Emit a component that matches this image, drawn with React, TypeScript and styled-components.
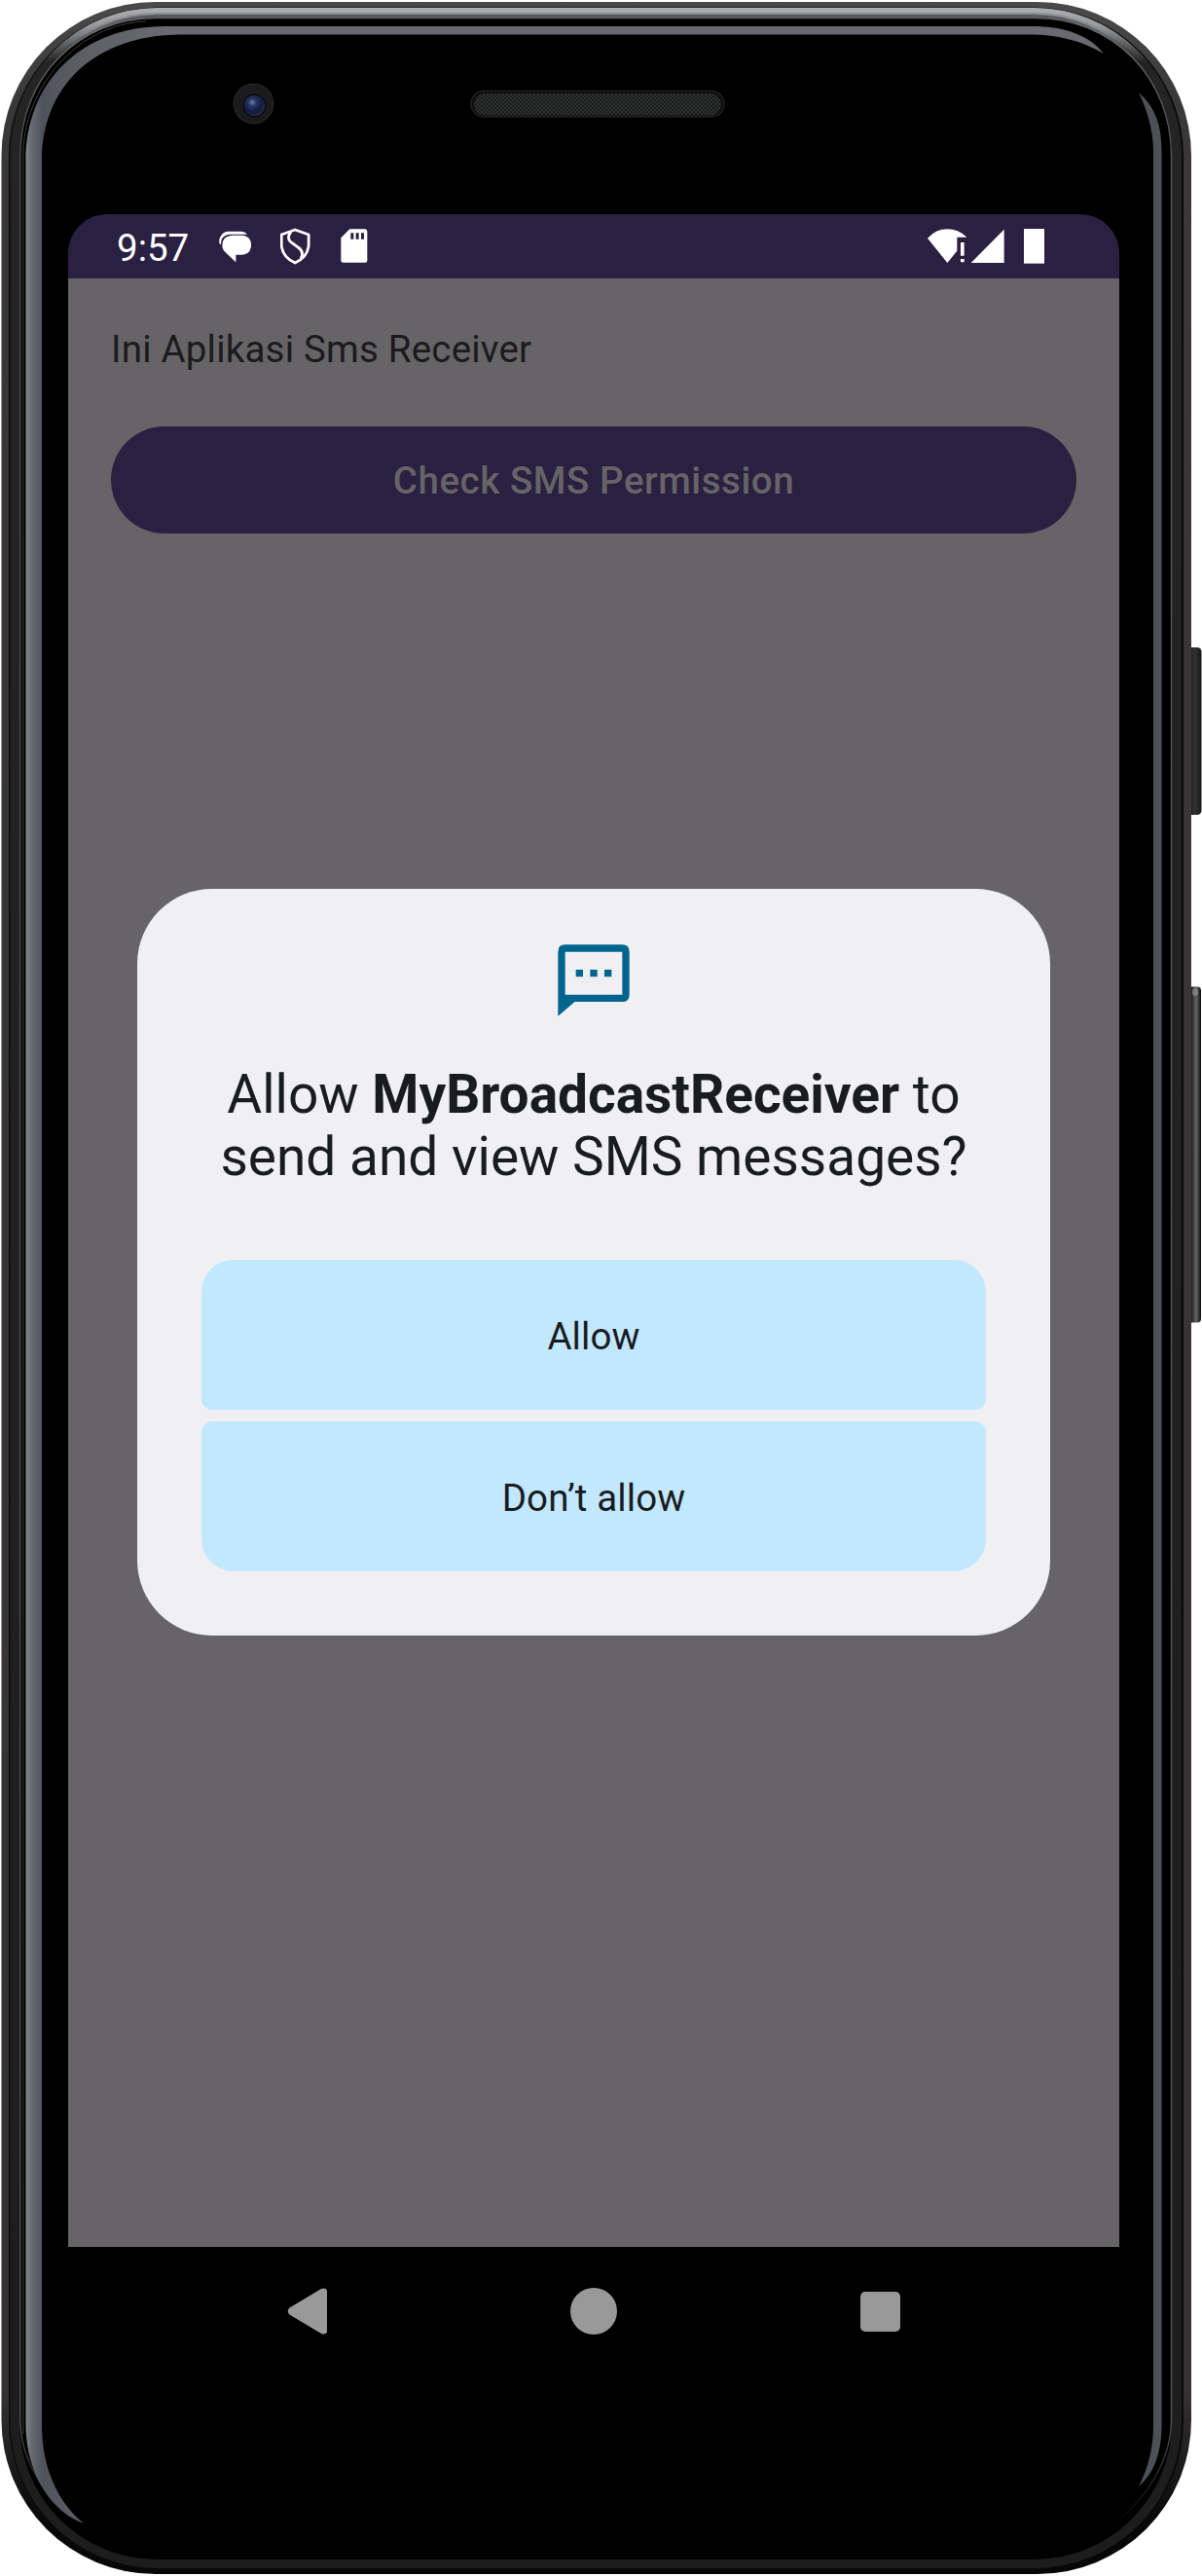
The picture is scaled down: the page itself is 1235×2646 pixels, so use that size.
import React from "react";
import styled, { createGlobalStyle } from "styled-components";

const GlobalStyle = createGlobalStyle`
  * { box-sizing: border-box; }
  body { margin: 0; background: #fff; font-family: Roboto, "Noto Sans", sans-serif; }
`;

const Stage = styled.main`
  position: relative;
  display: flex;
  width: 1235px;
  height: 2646px;
  padding: 220px 85px 0 70px;
  overflow: hidden;
`;

const DeviceArt = styled.svg`
  position: absolute;
  inset: 0;
  display: block;
`;

const Screen = styled.div`
  position: relative;
  display: flex;
  flex-direction: column;
  width: 1080px;
  height: 2220px;
  border-radius: 40px;
  overflow: hidden;
  background: #000;
`;

const StatusBar = styled.header`
  display: flex;
  align-items: center;
  flex: 0 0 66px;
  padding: 0 77px 0 50px;
  background: #2a2042;
  color: #fff;
`;

const Clock = styled.span`
  width: 105px;
  padding-top: 3px;
  font-size: 38.5px;
  line-height: 45px;
`;

const StatusGroup = styled.div<{ $gap: number; $end?: boolean }>`
  display: flex;
  align-items: center;
  gap: ${(p) => p.$gap}px;
  margin-left: ${(p) => (p.$end ? "auto" : "0")};
`;

const Glyph = styled.svg`
  display: block;
  flex: none;
`;

const Content = styled.section`
  position: relative;
  display: flex;
  flex-direction: column;
  flex: 1;
  padding: 44px;
  background: #666466;
`;

const Intro = styled.p`
  margin: 0 0 44px;
  padding: 1px 0 8px;
  font-size: 38.5px;
  line-height: 55px;
  letter-spacing: 0.2px;
  color: #1b1a1c;
`;

const PrimaryButton = styled.button`
  height: 110px;
  border: 0;
  border-radius: 55px;
  background: #2a2042;
  color: #666466;
  font: 500 38.5px/55px Roboto, sans-serif;
  letter-spacing: 0.55px;
  padding-top: 2px;
`;

const DialogLayer = styled.div`
  position: absolute;
  inset: 0;
  display: flex;
  align-items: center;
  justify-content: center;
  padding-bottom: 1px;
`;

const Dialog = styled.div`
  display: flex;
  flex-direction: column;
  align-items: center;
  width: 938px;
  height: 767px;
  padding: 50px 66px 66px;
  border-radius: 77px;
  background: #f0f0f3;
  color: #191c1e;
`;

const DialogTitle = styled.h1`
  margin: 41px 0 0;
  font-size: 55px;
  font-weight: 400;
  line-height: 64px;
  text-align: center;
`;

const Actions = styled.div`
  display: flex;
  flex-direction: column;
  gap: 12px;
  width: 100%;
  margin-top: auto;
`;

const ActionButton = styled.button<{ $last?: boolean }>`
  height: 154px;
  padding-top: 4px;
  border: 0;
  border-radius: ${(p) => (p.$last ? "11px 11px 33px 33px" : "33px 33px 11px 11px")};
  background: #c2e8ff;
  color: #191c1e;
  font: 400 38.5px/45px Roboto, sans-serif;
  letter-spacing: 0.1px;
`;

const NavBar = styled.nav`
  display: flex;
  align-items: center;
  justify-content: space-between;
  flex: 0 0 132px;
  padding: 0 225px;
  background: #000;
`;

function PhoneArt() {
  return (
    <DeviceArt width="1235" height="2646" viewBox="0 0 1235 2646" aria-hidden="true">
      <defs>
        <linearGradient id="rim" gradientUnits="userSpaceOnUse" x1="0" y1="2" x2="0" y2="2644">
          <stop offset="0" stopColor="#4b4949" />
          <stop offset="0.04" stopColor="#3a3738" />
          <stop offset="0.93" stopColor="#353233" />
          <stop offset="0.98" stopColor="#070707" />
        </linearGradient>
        <linearGradient id="metal" gradientUnits="userSpaceOnUse" x1="0" y1="0" x2="0" y2="2644">
          <stop offset="0" stopColor="#8e9094" />
          <stop offset="0.012" stopColor="#85878b" />
          <stop offset="0.024" stopColor="#242424" />
          <stop offset="1" stopColor="#1d1d1d" />
        </linearGradient>
        <linearGradient id="metalBright" gradientUnits="userSpaceOnUse" x1="0" y1="0" x2="0" y2="90">
          <stop offset="0" stopColor="#b4b6b9" />
          <stop offset="0.3" stopColor="#96989b" />
          <stop offset="0.75" stopColor="#262626" stopOpacity="0" />
        </linearGradient>
        <linearGradient id="metalDim" gradientUnits="userSpaceOnUse" x1="0" y1="0" x2="0" y2="90">
          <stop offset="0" stopColor="#505255" />
          <stop offset="0.75" stopColor="#262626" stopOpacity="0" />
        </linearGradient>
        <linearGradient id="leftGlare" gradientUnits="userSpaceOnUse" x1="26" y1="0" x2="200" y2="0">
          <stop offset="0" stopColor="#888a8d" />
          <stop offset="0.035" stopColor="#686b71" />
          <stop offset="0.1" stopColor="#4f535b" />
          <stop offset="0.35" stopColor="#5e5f66" />
          <stop offset="0.8" stopColor="#696a71" />
        </linearGradient>
        <linearGradient id="edgeLight" gradientUnits="userSpaceOnUse" x1="0" y1="0" x2="0" y2="2646">
          <stop offset="0" stopColor="#6c6d6f" />
          <stop offset="0.94" stopColor="#6c6d6f" />
          <stop offset="0.98" stopColor="#6c6d6f" stopOpacity="0" />
        </linearGradient>
        <linearGradient id="power" x1="0" x2="1" y1="0" y2="0">
          <stop offset="0" stopColor="#0c0c0c" />
          <stop offset="0.5" stopColor="#333" />
          <stop offset="1" stopColor="#171717" />
        </linearGradient>
        <linearGradient id="volume" x1="0" x2="1" y1="0" y2="0">
          <stop offset="0" stopColor="#101010" />
          <stop offset="0.35" stopColor="#2b2b2b" />
          <stop offset="0.65" stopColor="#666" />
          <stop offset="1" stopColor="#0b0b0b" />
        </linearGradient>
        <radialGradient id="lens" cx="0.4" cy="0.35" r="0.65">
          <stop offset="0" stopColor="#6f7cab" />
          <stop offset="0.3" stopColor="#26335f" />
          <stop offset="0.7" stopColor="#141d40" />
          <stop offset="1" stopColor="#232a45" />
        </radialGradient>
        <pattern id="mesh" width="4" height="4" patternUnits="userSpaceOnUse">
          <rect width="4" height="4" fill="#181a19" />
          <circle cx="1" cy="1" r="0.8" fill="#525553" />
          <circle cx="3" cy="3" r="0.8" fill="#525553" />
        </pattern>
      </defs>

      <rect x="1220" y="665" width="14.5" height="172" rx="4.5" fill="url(#power)" />
      <rect x="1220" y="1013.500" width="14" height="345" rx="4" fill="url(#volume)" />
      <rect x="1225" y="1015" width="6" height="8" rx="3" fill="#9a9a9a" opacity="0.6" />

      <rect x="1.500" y="2" width="1222.500" height="2642" rx="158" fill="url(#rim)" />
      <rect x="9" y="7.500" width="1207" height="2632" rx="153" fill="#090909" />
      <rect x="10.500" y="8.500" width="1203.500" height="2629.500" rx="151" fill="url(#metal)" />
      <rect x="12" y="10.500" width="1200" height="2625" rx="150" fill="none" stroke="url(#metalBright)" strokeWidth="5" />
      <rect x="18" y="16.500" width="1188" height="2610" rx="144" fill="none" stroke="url(#metalDim)" strokeWidth="3" />
      <rect x="20" y="18" width="1184" height="2611" rx="141" fill="#000" />
      <path
        d="M91 2600C50 2572 20.800 2530 20.800 2485V160C20.800 80 80 18.500 160 18.500H1064C1144 18.500 1203.500 80 1203.500 160V2485C1203.500 2530 1174 2574 1133 2600"
        fill="none" stroke="url(#edgeLight)" strokeWidth="1.300" opacity="0.8"
      />
      <path d="M23.800 2500V160C23.800 90 80 24 150 22" fill="none" stroke="#3c3c3d" strokeWidth="1" />

      <path
        d="M26.500 2490V165C26.500 84 84 27 170 27H1060C1095 27 1120 37 1134 55C1112 42 1086 35.500 1060 35.500H185C96 36 43 90 43 165V2490C43 2535 59 2570 86 2592C48 2578 26.500 2535 26.500 2490Z"
        fill="url(#leftGlare)"
      />
      <path
        d="M1170 95C1184 108 1193.500 123 1193.500 155V2490C1193.500 2520 1186 2540 1170 2554C1180 2534 1185 2515 1185 2490V155C1185 133 1178 112 1170 95Z"
        fill="#4e5057"
      />

      <circle cx="260.500" cy="106.500" r="21" fill="#1b1b1d" />
      <circle cx="260.500" cy="106.500" r="20" fill="none" stroke="#29292b" strokeWidth="1.500" strokeDasharray="1 1" />
      <circle cx="261.500" cy="108.500" r="12" fill="#07080e" />
      <circle cx="261.500" cy="108.500" r="10.800" fill="url(#lens)" />

      <rect x="484" y="93.500" width="260" height="26.500" rx="13.250" fill="#0c0c0d" stroke="#202024" strokeWidth="1.500" />
      <rect x="487" y="96" width="254" height="22.500" rx="11.200" fill="url(#mesh)" />
    </DeviceArt>
  );
}

function StatusIcons() {
  return (
    <StatusGroup $gap={29}>
      <Glyph width="33.7" height="32.7" viewBox="374 85 101 98" fill="#fff">
        <path d="M377 127C373 120 374 110 379 102Q388 87 402 87H440Q454 87 461 96H411Q390 96 383 110Q380 118 380 126Z" />
        <path d="M414 99H443Q473 101 473 129Q473 158 443 159H426V182L394 152Q384 144 384 129Q385 101 414 99Z" />
      </Glyph>
      <Glyph width="31.3" height="38" viewBox="561.500 73 94 114" fill="none" stroke="#fff" strokeWidth="8.500" strokeLinejoin="round">
        <path d="M607 79L649 94V125Q647 163 607 181Q567 163 565 125V94Z" />
        <path d="M594 86Q580 104 594 117L620 136Q635 147 625 168" />
      </Glyph>
      <Glyph width="30" height="36" viewBox="743 77 90 108" fill="#fff">
        <path fillRule="evenodd" d="M777 78H825Q831 79 831 85V175Q831 181 825 181H757Q750 181 750 175V105ZM780 90V109H789V90ZM796 90V109H805V90ZM812 90V109H821V90Z" />
      </Glyph>
    </StatusGroup>
  );
}

function SystemIcons() {
  return (
    <StatusGroup $gap={0} $end>
      <Glyph width="120" height="36" viewBox="69 75 360 108" fill="#fff">
        <path d="M69 104Q95 76 130 76Q164 76 190 101H160V143L130 180Z" />
        <path d="M171 117H182V158H171ZM171 168H182V178H171Z" />
        <path d="M203 180L305 77V180Z" />
        <path d="M366 75H429V182H366Z" />
      </Glyph>
    </StatusGroup>
  );
}

export default function App() {
  return (
    <>
      <GlobalStyle />
      <Stage>
        <PhoneArt />
        <Screen>
          <StatusBar>
            <Clock>9:57</Clock>
            <StatusIcons />
            <SystemIcons />
          </StatusBar>
          <Content>
            <Intro>Ini Aplikasi Sms Receiver</Intro>
            <PrimaryButton>Check SMS Permission</PrimaryButton>
            <DialogLayer>
              <Dialog role="dialog">
                <Glyph width="88" height="88" viewBox="0 0 24 24" fill="#00658e">
                  <path fillRule="evenodd" d="M4 2H20Q22 2 22 4V16Q22 18 20 18H6.700L2 22V4Q2 2 4 2ZM4 4V16H20V4Z" />
                  <path d="M7 9H9V11H7ZM11 9H13V11H11ZM15 9H17V11H15Z" />
                </Glyph>
                <DialogTitle>
                  Allow <b>MyBroadcastReceiver</b> to
                  <br />
                  send and view SMS messages?
                </DialogTitle>
                <Actions>
                  <ActionButton>Allow</ActionButton>
                  <ActionButton $last>Don’t allow</ActionButton>
                </Actions>
              </Dialog>
            </DialogLayer>
          </Content>
          <NavBar>
            <Glyph width="41" height="48" viewBox="0 0 41 48" fill="#999">
              <path d="M2.500 20.500L35 1Q41 -1 41.500 5V43Q41 49 35 47L2.500 27.500Q-1 24 2.500 20.500Z" />
            </Glyph>
            <Glyph width="48" height="48" viewBox="0 0 48 48" fill="#999">
              <circle cx="24" cy="24" r="24" />
            </Glyph>
            <Glyph width="41" height="41" viewBox="0 0 41 41" fill="#999">
              <rect width="41" height="41" rx="5" />
            </Glyph>
          </NavBar>
        </Screen>
      </Stage>
    </>
  );
}
